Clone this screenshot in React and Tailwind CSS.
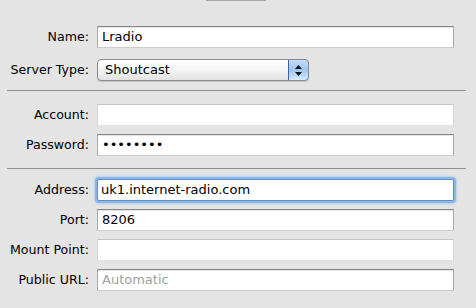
const font = { fontFamily: '"DejaVu Sans", "Liberation Sans", sans-serif' };

const Label = ({ children }) => (
  <div className="w-[90px] shrink-0 text-right text-[12.6px] text-black pr-px">{children}</div>
);

const Field = ({ value, placeholder, dim, focus }) => {
  let cls =
    "ml-[7px] w-[357px] h-[22px] bg-white flex items-center px-[4px] text-[13px] text-black border border-t-[#858585] border-x-[#aaaaaa] border-b-[#cdcdcd] shadow-[inset_0_1px_0_#e6e6e6]";
  if (dim)
    cls =
      "ml-[7px] w-[357px] h-[22px] bg-white flex items-center px-[4px] text-[13px] text-black border border-t-[#c4c4c4] border-x-[#d6d6d6] border-b-[#e2e2e2]";
  if (focus)
    cls =
      "ml-[7px] w-[357px] h-[22px] bg-white flex items-center px-[3px] text-[13px] text-black border border-[#5d8fcf] rounded-[2px] shadow-[0_0_0_2px_#8db6e6,0_0_2px_3px_#b4cfee]";
  return (
    <div className={cls}>
      {value ? <span>{value}</span> : <span className="text-[#a0a0a0]">{placeholder}</span>}
    </div>
  );
};

const Row = ({ label, children, className = "" }) => (
  <div className={"flex items-center " + className}>
    <Label>{label}</Label>
    {children}
  </div>
);

const Separator = ({ className = "" }) => (
  <div className={"ml-[7px] w-[459px] h-px bg-[#8f8f8f] " + className} />
);

export default function App() {
  return (
    <div className="w-[476px] h-[308px] bg-[#e4e4e4] overflow-hidden" style={font}>
      <div className="ml-[206px] w-[60px] h-px bg-[#a6a6a6]" />
      <Row label="Name:" className="mt-[25px]">
        <Field value="Lradio" />
      </Row>
      <Row label="Server Type:" className="mt-[11px]">
        <div className="ml-[7px] w-[212px] h-[22px] flex rounded-[4px] border border-[#8a8a8a] bg-gradient-to-b from-white via-[#f4f4f4] to-[#e2e2e2] shadow-[0_1px_1px_rgba(0,0,0,0.15)] overflow-hidden">
          <div className="flex-1 flex items-center pl-[7px] text-[13px] text-black">Shoutcast</div>
          <div className="w-[21px] -my-px -mr-px rounded-r-[4px] border border-[#3f5fa6] bg-gradient-to-b from-[#c4ddf6] via-[#9cc6f0] to-[#d5ebfd] flex flex-col items-center justify-center gap-[3px]">
            <svg width="7" height="4" viewBox="0 0 7 4"><path d="M3.5 0 L7 4 L0 4 Z" fill="#111" /></svg>
            <svg width="7" height="4" viewBox="0 0 7 4"><path d="M0 0 L7 0 L3.5 4 Z" fill="#111" /></svg>
          </div>
        </div>
      </Row>
      <Separator className="mt-[9px]" />
      <Row label="Account:" className="mt-[13px]">
        <Field dim />
      </Row>
      <Row label="Password:" className="mt-[8px]">
        <Field value="••••••••" />
      </Row>
      <Separator className="mt-[12px]" />
      <Row label="Address:" className="mt-[10px]">
        <Field value="uk1.internet-radio.com" focus />
      </Row>
      <Row label="Port:" className="mt-[8px]">
        <Field value="8206" />
      </Row>
      <Row label="Mount Point:" className="mt-[8px]">
        <Field dim />
      </Row>
      <Row label="Public URL:" className="mt-[8px]">
        <Field placeholder="Automatic" />
      </Row>
    </div>
  );
}
